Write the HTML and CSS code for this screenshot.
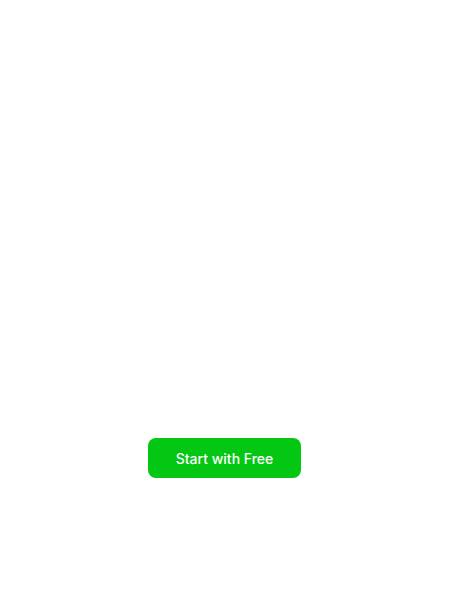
FILE: index.html
```html
<!DOCTYPE html>
<html>
<head>
<meta charset="utf-8">
<link rel="stylesheet" href="styles.css">
</head>
<body>
<main class="page">
  <button class="cta">Start with Free</button>
</main>
</body>
</html>
```
FILE: styles.css
```css
html, body { margin: 0; padding: 0; background: #fff; }
.page {
  width: 450px;
  height: 600px;
  display: flex;
  flex-direction: column;
  align-items: center;
  padding-top: 438px;
  padding-right: 1px;
  box-sizing: border-box;
}
.cta {
  width: 153px;
  height: 40px;
  border: none;
  border-radius: 8px;
  background: #04c713;
  color: #fff;
  font-family: Inter, "Noto Sans", sans-serif;
  font-size: 14px;
  font-weight: 500;
  padding: 0;
  cursor: pointer;
}
```
